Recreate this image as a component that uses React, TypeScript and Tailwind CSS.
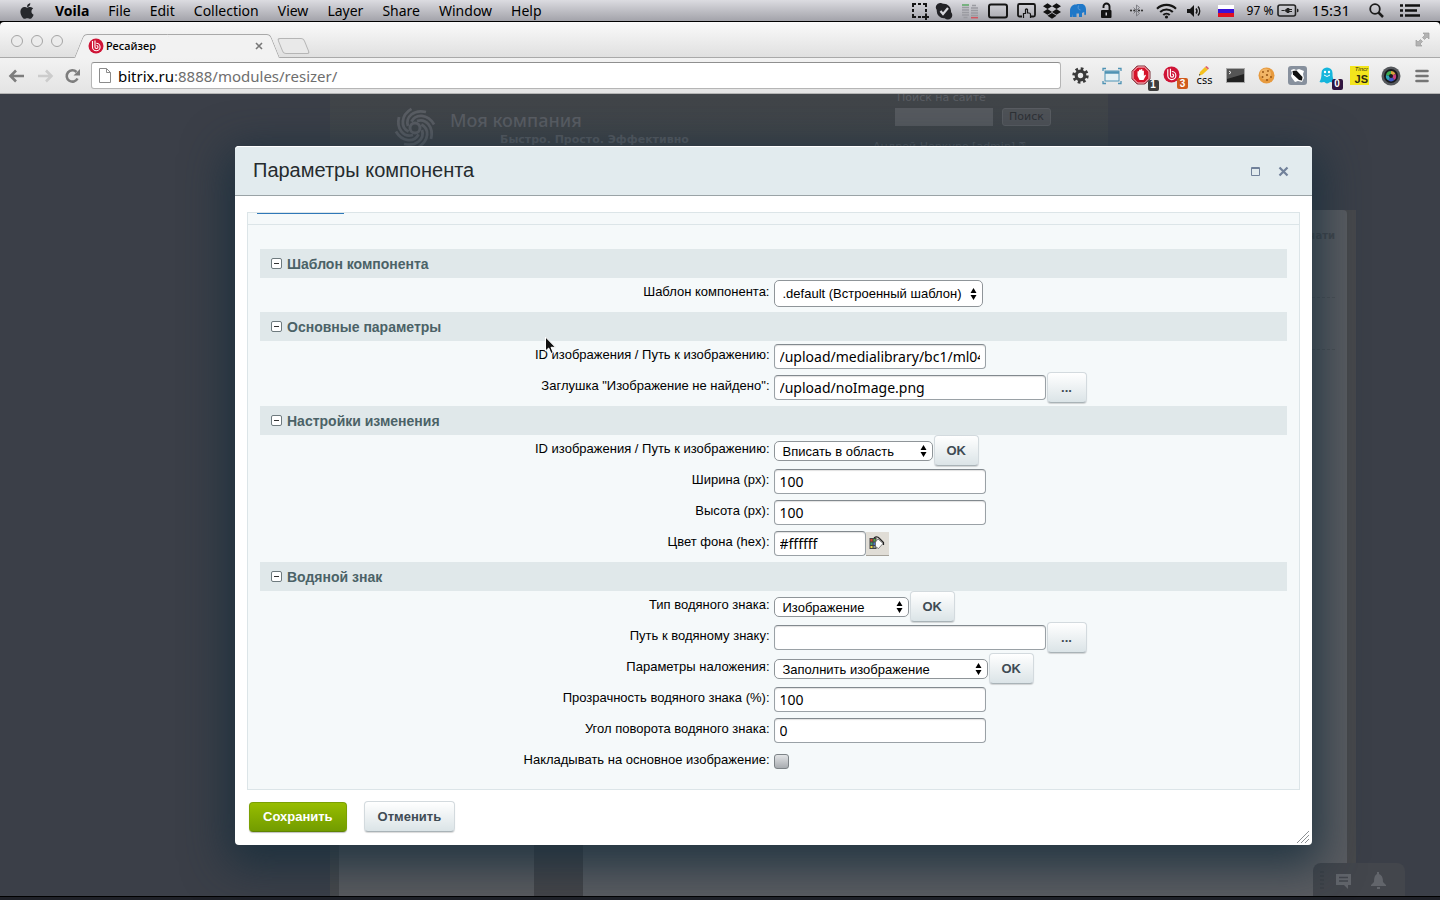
import { useState } from "react";
import type { ReactNode } from "react";
import { FaApple, FaDropbox } from "react-icons/fa";

type Control =
  | { type: "text"; value: string; size: "sm" | "md" | "lg"; extra?: "browse" | "color" }
  | { type: "select"; value: string; width: string; tall?: boolean; confirm?: boolean }
  | { type: "checkbox" };

type Field = { id: string; label: string; control: Control };

type Section = { title: string; fields: Field[] };

const sections: Section[] = [
  {
    title: "Шаблон компонента",
    fields: [
      {
        id: "template",
        label: "Шаблон компонента:",
        control: { type: "select", value: ".default (Встроенный шаблон)", width: "w-[209px]", tall: true }
      }
    ]
  },
  {
    title: "Основные параметры",
    fields: [
      {
        id: "image",
        label: "ID изображения / Путь к изображению:",
        control: { type: "text", value: "/upload/medialibrary/bc1/ml04", size: "md" }
      },
      {
        id: "stub",
        label: 'Заглушка "Изображение не найдено":',
        control: { type: "text", value: "/upload/noImage.png", size: "lg", extra: "browse" }
      }
    ]
  },
  {
    title: "Настройки изменения",
    fields: [
      {
        id: "mode",
        label: "ID изображения / Путь к изображению:",
        control: { type: "select", value: "Вписать в область", width: "w-[159px]", confirm: true }
      },
      { id: "width", label: "Ширина (px):", control: { type: "text", value: "100", size: "md" } },
      { id: "height", label: "Высота (px):", control: { type: "text", value: "100", size: "md" } },
      { id: "color", label: "Цвет фона (hex):", control: { type: "text", value: "#ffffff", size: "sm", extra: "color" } }
    ]
  },
  {
    title: "Водяной знак",
    fields: [
      {
        id: "wm-type",
        label: "Тип водяного знака:",
        control: { type: "select", value: "Изображение", width: "w-[135px]", confirm: true }
      },
      {
        id: "wm-path",
        label: "Путь к водяному знаку:",
        control: { type: "text", value: "", size: "lg", extra: "browse" }
      },
      {
        id: "wm-overlay",
        label: "Параметры наложения:",
        control: { type: "select", value: "Заполнить изображение", width: "w-[214px]", confirm: true }
      },
      { id: "wm-alpha", label: "Прозрачность водяного знака (%):", control: { type: "text", value: "100", size: "md" } },
      { id: "wm-angle", label: "Угол поворота водяного знака:", control: { type: "text", value: "0", size: "md" } },
      { id: "wm-apply", label: "Накладывать на основное изображение:", control: { type: "checkbox" } }
    ]
  }
];

const menuItems = ["File", "Edit", "Collection", "View", "Layer", "Share", "Window", "Help"];

const statusIcons: Array<{ name: string; cell: string; icon: ReactNode }> = [
  {
    name: "Screenshot",
    cell: "w-6",
    icon: (
      <svg width="18" height="18" viewBox="0 0 18 18" fill="none" stroke="#151515" strokeWidth="2">
        <path d="M2 5V2h3M7 2h3M12 2h3v3M15 7v3M2 7v3M2 12v3h3M7 15h3M11 15h7M15 11.500v7" />
      </svg>
    )
  },
  {
    name: "Skype",
    cell: "w-6",
    icon: (
      <svg width="18" height="18" viewBox="0 0 18 18">
        <path d="M5 1a4 4 0 0 1 3 .8A7.300 7.300 0 0 1 16 10a4.300 4.300 0 0 1-6.300 6.200A7.300 7.300 0 0 1 1.800 8 4.300 4.300 0 0 1 5 1Z" fill="#222226" />
        <path d="m5.500 9 2.500 3 5-6" stroke="#d8d8dd" strokeWidth="2.200" fill="none" />
      </svg>
    )
  },
  {
    name: "Traffic",
    cell: "w-7",
    icon: (
      <svg width="18" height="18" viewBox="0 0 18 18" strokeWidth="1.500">
        <path d="M1 5.500h7M1 8h7M1 10.500h7M1 13h7M2.500 15.500h4M11 3.500h4M10 6h7M10 8.500h7M10 11h7M10 13.500h7" stroke="#9a9ba1" />
        <path d="M1 3h7" stroke="#5aa763" />
        <path d="M10 15.700h7" stroke="#d05560" />
      </svg>
    )
  },
  {
    name: "Display",
    cell: "w-7",
    icon: (
      <svg width="20" height="16" viewBox="0 0 20 16">
        <rect x="1" y="1.500" width="18" height="13" rx="2" fill="none" stroke="#151515" strokeWidth="2" />
      </svg>
    )
  },
  {
    name: "Gestures",
    cell: "w-7",
    icon: (
      <svg width="19" height="17" viewBox="0 0 19 17" fill="none" stroke="#151515">
        <path d="M5 14.500H2.500A1.500 1.500 0 0 1 1 13V3.500A1.500 1.500 0 0 1 2.500 2h14A1.500 1.500 0 0 1 18 3.500V13a1.500 1.500 0 0 1-1.500 1.500H14" strokeWidth="1.800" />
        <path d="M6.500 16v-5M8.500 12V7.500q1-1 2 0V11h1.500q1.500 0 1.500 1.500V16M6.500 11.500h2" strokeWidth="1.200" />
      </svg>
    )
  },
  { name: "Dropbox", cell: "w-6", icon: <FaDropbox size={18} color="#111" /> },
  {
    name: "Elephant",
    cell: "w-7",
    icon: (
      <svg width="18" height="17" viewBox="0 0 18 17" fill="#1f78c8">
        <path d="M1 15V9c0-4 2.500-6.500 5.500-6.500 1 0 1.500-.5 3-.5h3c3 0 4.500 2.500 4.500 5.500V12c0 1.500-1.800 1.500-1.800 0V10L13 11v4h-3v-3.500H7.500V15H4v-3l-.5 3Z" />
        <path d="M9.500 3.500C8.500 6 9.500 8 11.500 8" stroke="#7fb0e0" fill="none" strokeWidth=".6" />
      </svg>
    )
  },
  {
    name: "Lock",
    cell: "w-7",
    icon: (
      <svg width="12" height="17" viewBox="0 0 12 17">
        <rect x="1" y="8" width="10.500" height="8" rx="1" fill="#111" />
        <path d="M9.500 9V4.500a3 3 0 0 0-6 0V6" fill="none" stroke="#111" strokeWidth="1.900" />
        <rect x="5.500" y="10.500" width="1.500" height="3" fill="#c8c8cd" />
      </svg>
    )
  },
  {
    name: "Bluetooth",
    cell: "w-8",
    icon: (
      <svg width="15" height="15" viewBox="0 0 15 15" fill="none" stroke="#77787e" strokeWidth=".9">
        <path d="m4.500 4.500 6 6-3 2.500V2l3 2.500-6 6" />
        <g fill="#333" stroke="none">
          <circle cx="2" cy="7.500" r="1.100" />
          <circle cx="5.300" cy="7.500" r="1.100" />
          <circle cx="10" cy="7.500" r="1.100" />
          <circle cx="13" cy="7.500" r="1.100" />
        </g>
      </svg>
    )
  },
  {
    name: "Wi-Fi",
    cell: "w-7",
    icon: (
      <svg width="21" height="16" viewBox="0 0 21 16" fill="none" stroke="#151515" strokeWidth="2.100">
        <path d="M1 5.800a13.500 13.500 0 0 1 19 0M4.200 9a9 9 0 0 1 12.600 0M7.300 12a4.600 4.600 0 0 1 6.400 0" />
        <circle cx="10.500" cy="14" r="1.600" fill="#151515" stroke="none" />
      </svg>
    )
  },
  {
    name: "Volume",
    cell: "w-7",
    icon: (
      <svg width="16" height="14" viewBox="0 0 16 14" fill="#151515">
        <path d="M1 5h3l4-4v12L4 9H1Z" />
        <path d="M10 4.500a4 4 0 0 1 0 5M12 2.500a7 7 0 0 1 0 9" fill="none" stroke="#151515" strokeWidth="1.500" />
      </svg>
    )
  },
  {
    name: "Keyboard layout",
    cell: "w-9",
    icon: (
      <svg width="16" height="12" viewBox="0 0 16 12">
        <rect width="16" height="4" fill="#fff" />
        <rect y="4" width="16" height="4" fill="#3a12d8" />
        <rect y="8" width="16" height="4" fill="#e01020" />
      </svg>
    )
  }
];

const BitrixMark = ({ size }: { size: number }) => (
  <svg width={size} height={size} viewBox="0 0 16 16" fill="none">
    <circle cx="8" cy="8" r="7.500" fill="#cf1436" />
    <path d="M4.500 3v6a3.800 3.800 0 1 0 3.800-3.800M7 2.500V9a1.500 1.500 0 1 0 1.500-1.500" stroke="#fff" strokeWidth="1.100" />
  </svg>
);

const ToolbarBadge = ({ text, color }: { text: string; color: string }) => (
  <span
    className={`absolute -right-1 -bottom-1 flex h-[11px] w-[11px] items-center justify-center rounded-[2px] font-['Liberation_Sans'] text-[10px] leading-none font-bold text-white ${color}`}
  >
    {text}
  </span>
);

const extensions: Array<{ name: string; icon: ReactNode }> = [
  {
    name: "Настройки",
    icon: (
      <svg width="17" height="17" viewBox="0 0 17 17">
        <circle cx="8.500" cy="8.500" r="6.800" fill="none" stroke="#3a3a3a" strokeWidth="2.800" strokeDasharray="2.670 2.670" />
        <circle cx="8.500" cy="8.500" r="4.300" fill="none" stroke="#3a3a3a" strokeWidth="3.200" />
      </svg>
    )
  },
  {
    name: "Window Resizer",
    icon: (
      <svg width="20" height="18" viewBox="0 0 20 18" fill="none" stroke="#4f93b4">
        <path d="M1 4V1.500h3M16 1.500h3V4M1 14v2.500h3M16 16.500h3V14" strokeWidth="1.300" />
        <rect x="3" y="4" width="14" height="10" fill="#e5f1f5" />
        <path d="M3 5.500h14" strokeWidth="2.500" />
      </svg>
    )
  },
  {
    name: "AdBlock",
    icon: (
      <span className="relative flex pr-1 pb-0.5">
        <svg width="20" height="20" viewBox="0 0 20 20">
          <path d="M6.200 1h7.600L19 6.200v7.600L13.800 19H6.200L1 13.800V6.200Z" fill="#d5132a" stroke="#7b3039" />
          <path d="M6.600 2h6.800L18 6.600v6.800L13.400 18H6.600L2 13.400V6.600Z" fill="none" stroke="#fff" strokeWidth=".8" />
          <path d="M6.500 11V6.500q.8-1 1.500 0V5q.9-1 1.700 0v-.500q.9-1 1.700 0V6q.8-.8 1.500 0v5l1-1.200q1-.300 1 .600L12.500 15h-4Z" fill="#fff" />
        </svg>
        <ToolbarBadge text="1" color="bg-[#3d3d3d]" />
      </span>
    )
  },
  {
    name: "Битрикс",
    icon: (
      <span className="relative flex pr-1 pb-0.5">
        <BitrixMark size={17} />
        <ToolbarBadge text="3" color="bg-[#d05a1c]" />
      </span>
    )
  },
  {
    name: "CSS",
    icon: (
      <span className="flex flex-col items-center">
        <svg width="12" height="10" viewBox="0 0 12 10">
          <path d="m1 9.500 1-3.500 5-5 3 2.500-5.500 5Z" fill="#f4c11e" />
          <path d="m7 1 1.500-1L11 2.300 10 3.500Z" fill="#e0606e" />
          <path d="m1 9.500.400-1.500 1.200 1Z" fill="#222" />
        </svg>
        <span className="font-['DejaVu_Sans'] text-[10px] leading-[10px] font-medium text-black">css</span>
      </span>
    )
  },
  {
    name: "Terminal",
    icon: (
      <svg width="19" height="15" viewBox="0 0 19 15">
        <rect x=".5" y=".5" width="18" height="14" fill="#222" stroke="#aaa" />
        <path d="M1 1h17v5L1 11Z" fill="#555" />
        <path d="m3 3 2 1.500L3 6" fill="none" stroke="#fff" strokeWidth=".9" />
      </svg>
    )
  },
  {
    name: "Cookies",
    icon: (
      <svg width="17" height="17" viewBox="0 0 17 17">
        <circle cx="8.500" cy="8.500" r="8" fill="#e79a3e" />
        <circle cx="7.500" cy="7" r="5.500" fill="#f2b566" />
        <g fill="#9a5716">
          <circle cx="5" cy="5" r="1" />
          <circle cx="10" cy="4" r=".9" />
          <circle cx="9" cy="8" r="1.100" />
          <circle cx="4.500" cy="10" r="1" />
          <circle cx="9" cy="13" r="1.100" />
          <circle cx="13" cy="10" r="1" />
        </g>
      </svg>
    )
  },
  {
    name: "Tag",
    icon: (
      <svg width="19" height="19" viewBox="0 0 19 19">
        <rect width="19" height="19" rx="3" fill="#87909d" />
        <path d="m3 4 3-1 2 1 3-1 5 2-1 3 1 4-2 4-4-1-3 1-3-4-1-2 1-3Z" fill="#fff" />
        <path d="m4.500 5 4-.5 6 6.500-.5 3.500-3-.5L5 8.500Z" fill="#111" />
      </svg>
    )
  },
  {
    name: "Ghostery",
    icon: (
      <span className="relative flex pr-1 pb-0.5">
        <svg width="16" height="18" viewBox="0 0 16 18">
          <path d="M2.500 7a5.500 5.500 0 0 1 11 0c0 4 .5 6 2 9-2 1.500-3 0-4 0s-2 1.500-3.500 1.500S6 16 5 16s-2.500 1-4.500 0c1.500-3 2-5 2-9Z" fill="#14b5dc" />
          <circle cx="6" cy="6" r="1.200" fill="#fff" />
          <circle cx="10" cy="6" r="1.200" fill="#fff" />
          <path d="M5 9q3 3 6 0" stroke="#fff" fill="none" />
        </svg>
        <ToolbarBadge text="0" color="bg-[#2f1440]" />
      </span>
    )
  },
  {
    name: "Tincr",
    icon: (
      <span className="flex h-[19px] w-[19px] flex-col items-end bg-[#f3e51c] pr-px text-[#2e2b10]">
        <span className="font-['Liberation_Sans'] text-[6px] leading-[7px] italic">Tincr</span>
        <span className="font-['Liberation_Sans'] text-[11px] leading-3 font-bold">JS</span>
      </span>
    )
  },
  {
    name: "Color picker",
    icon: (
      <svg width="20" height="20" viewBox="0 0 20 20">
        <circle cx="10" cy="10" r="9.500" fill="#55585c" />
        <circle cx="10" cy="10" r="7" fill="#17181c" />
        <path d="M10 10V5a5 5 0 0 1 4.500 3Z" fill="#dba43c" />
        <path d="m10 10 4.500-2a5 5 0 0 1-1 6Z" fill="#c83f7e" />
        <path d="m10 10 3.500 4a5 5 0 0 1-6 .5Z" fill="#4058c8" />
        <path d="m10 10-2.500 4.500A5 5 0 0 1 5 9Z" fill="#2fa5b9" />
        <path d="M10 10 5 9a5 5 0 0 1 5-4Z" fill="#3fae50" />
        <circle cx="10" cy="10" r="2" fill="#17181c" />
      </svg>
    )
  },
  {
    name: "Меню",
    icon: (
      <svg width="14" height="14" viewBox="0 0 14 14" stroke="#757575" strokeWidth="2.600" strokeLinecap="round">
        <path d="M1.500 2h11M1.500 7h11M1.500 12h11" />
      </svg>
    )
  }
];

const MenuBar = () => (
  <header className="flex h-[22px] items-center border-b border-black bg-linear-to-b from-[#dcdce1] to-[#a3a3aa] px-5 font-['Noto_Sans',sans-serif] text-[14px] leading-[21px] text-black">
    <FaApple size={18} color="#26282c" className="-ml-0.5" />
    <nav className="ml-[19px] flex gap-[19px]">
      <button type="button" className="font-bold">Voila</button>
      {menuItems.map((item) => (
        <button key={item} type="button">{item}</button>
      ))}
    </nav>
    <div className="-mr-[10px] ml-auto flex items-center">
      {statusIcons.map((status) => (
        <span key={status.name} title={status.name} className={`flex justify-center ${status.cell}`}>
          {status.icon}
        </span>
      ))}
      <span className="w-8 text-center text-[12px] whitespace-nowrap">97 %</span>
      <span className="flex w-6 justify-center">
        <svg width="22" height="13" viewBox="0 0 22 13">
          <rect x="1" y="1" width="17.500" height="11" rx="2" fill="none" stroke="#222" strokeWidth="1.600" />
          <path d="M20 4.500v4l1.500-1v-2Z" fill="#222" />
          <path d="M4.500 6.500h3M8 6.500l2-2h2v4h-2ZM12 5.500h3M12 7.500h3" fill="#222" stroke="#222" />
        </svg>
      </span>
      <span className="w-[62px] text-center text-[15px]">15:31</span>
      <span className="flex w-7 justify-center">
        <svg width="15" height="15" viewBox="0 0 15 15" fill="none" stroke="#1c1c1c">
          <circle cx="6" cy="6" r="4.800" strokeWidth="1.800" />
          <path d="m9.500 9.500 4.500 4.500" strokeWidth="2.500" />
        </svg>
      </span>
      <span className="flex w-10 justify-center">
        <svg width="22" height="15" viewBox="0 0 22 15" stroke="#111" strokeWidth="2.600">
          <path d="M1 2.500h3M6 2.500h15M1 7.500h3M6 7.500h12M1 12.500h3M6 12.500h15" />
        </svg>
      </span>
    </div>
  </header>
);

const TabStrip = () => (
  <div className="flex h-9 items-end rounded-t-[4px] border-b border-[#a9a9a9] bg-linear-to-b from-[#fafafa] to-[#e0e0e0] pl-[11px]">
    <div className="mb-[10px] flex gap-2">
      <span className="h-3 w-3 rounded-full border border-[#a5a5a5] bg-[#ececec]" />
      <span className="h-3 w-3 rounded-full border border-[#a5a5a5] bg-[#ececec]" />
      <span className="h-3 w-3 rounded-full border border-[#a5a5a5] bg-[#ececec]" />
    </div>
    <div className="relative -mb-px ml-[11px] flex h-6 w-[205px] items-center pr-[14px] pl-[14px]">
      <span className="absolute inset-y-0 left-0 w-1/2 origin-bottom -skew-x-[22deg] rounded-tl-[4px] border-t border-l border-[#a9a9a9] bg-[#f2f2f2]" />
      <span className="absolute inset-y-0 right-0 w-1/2 origin-bottom skew-x-[22deg] rounded-tr-[4px] border-t border-r border-[#a9a9a9] bg-[#f2f2f2]" />
      <span className="relative flex w-full items-center">
        <BitrixMark size={16} />
        <span className="ml-0.5 font-['Noto_Sans',sans-serif] text-[11px] leading-4 font-medium text-black">Ресайзер</span>
        <button type="button" aria-label="Закрыть вкладку" className="mr-0.5 ml-auto">
          <svg width="8" height="8" viewBox="0 0 8 8" stroke="#777" strokeWidth="1.600">
            <path d="m1 1 6 6M7 1 1 7" />
          </svg>
        </button>
      </span>
    </div>
    <button
      type="button"
      aria-label="Новая вкладка"
      className="mb-[3px] ml-px h-4 w-[27px] skew-x-[22deg] rounded-[3px] border border-[#b5b5b5] bg-[#e9e9e9]"
    />
    <svg className="mr-[10px] mb-[10px] ml-auto" width="15" height="15" viewBox="0 0 15 15" fill="#b3b3b3" stroke="#9c9c9c" strokeWidth=".7">
      <path d="M8 1h6v6l-2-2-2.500 2.500-2-2L10 3ZM7 14H1V8l2 2 2.500-2.500 2 2L5 12Z" />
    </svg>
  </div>
);

const Toolbar = () => (
  <div className="flex h-9 items-center border-b border-[#b4b4b4] bg-linear-to-b from-[#f2f2f2] to-[#e4e4e4] pr-[3px] pl-2">
    <div className="flex gap-[10px]">
      <button type="button" aria-label="Назад">
        <svg width="18" height="16" viewBox="0 0 18 16" fill="none" stroke="#7d7d7d" strokeWidth="2.600">
          <path d="M16 8H3M8 2.500 2.500 8 8 13.500" />
        </svg>
      </button>
      <button type="button" aria-label="Вперёд">
        <svg width="18" height="16" viewBox="0 0 18 16" fill="none" stroke="#cccccc" strokeWidth="2.600">
          <path d="M2 8h13M10 2.500 15.500 8 10 13.500" />
        </svg>
      </button>
      <button type="button" aria-label="Обновить">
        <svg width="18" height="16" viewBox="0 0 18 16" fill="none">
          <path d="M13.500 10.500A5.700 5.700 0 1 1 12.500 4" stroke="#7d7d7d" strokeWidth="2.600" />
          <path d="M16 1v6.500H9.500Z" fill="#7d7d7d" />
        </svg>
      </button>
    </div>
    <label className="mr-1 ml-[9px] flex h-[27px] flex-1 items-center rounded-[3px] border border-[#b5b5b5] border-t-[#8f8f8f] bg-white pl-[7px]">
      <svg width="12" height="15" viewBox="0 0 12 15" fill="#fff" stroke="#8b8b8b">
        <path d="M.5.5h7l4 4v10H.5ZM7.500.5v4h4" />
      </svg>
      <span className="ml-[7px] flex-1 font-['Noto_Sans',sans-serif] text-[15px] leading-6 text-[#6e6e6e]">
        <span className="text-black">bitrix.ru</span>:8888/modules/resizer/
      </span>
    </label>
    <div className="flex items-center">
      {extensions.map((extension) => (
        <button key={extension.name} type="button" title={extension.name} className="flex w-[31px] justify-center">
          {extension.icon}
        </button>
      ))}
    </div>
  </div>
);

const SiteBackground = () => (
  <div className="absolute inset-0 flex flex-col overflow-hidden bg-[#3b3f48] pl-[330px] font-['DejaVu_Sans',sans-serif] text-[#5b5e64]">
    <div className="flex h-[116px] w-[778px] shrink-0 bg-linear-to-b from-[#414549] to-[#3f4349] pl-16">
      <svg className="mt-[13px] h-[42px] w-[42px] shrink-0" viewBox="-21 -21 42 42" fill="none" stroke="#5b5e64" strokeWidth="2.800">
        <circle r="5" strokeWidth="3" />
        {[0, 45, 90, 135, 180, 225, 270, 315].map((angle) => (
          <path key={angle} d="M-7-2C-10-11-1-19 11-16" transform={`rotate(${angle})`} />
        ))}
      </svg>
      <div className="ml-[14px] pt-3">
        <div className="font-['Noto_Sans',sans-serif] text-[18px] leading-[28px] font-medium">Моя компания</div>
        <div className="pl-[50px] text-[11px] leading-3 font-bold">Быстро. Просто. Эффективно</div>
      </div>
      <div className="mt-[-3px] ml-auto w-[235px]">
        <div className="pl-6 text-[11px] leading-[14px]">Поиск на сайте</div>
        <div className="mt-[3px] ml-[22px] flex items-center gap-[9px]">
          <span className="h-[18px] w-[98px] bg-[#575a5f]" />
          <span className="rounded-[3px] border border-[#5a5d62] bg-[#4f5257] px-[6px] text-[11px] leading-4 text-[#2e3135]">Поиск</span>
        </div>
        <div className="mt-[14px] text-[11px] leading-[14px]">Андрей Неркуро [admin] ⍰</div>
      </div>
    </div>
    <div className="flex w-[1026px] flex-1 bg-[#47484b] px-[9px]">
      <div className="w-[195px] bg-[#5a5b5f]" />
      <div className="w-[49px] bg-[#444448]" />
      <div className="flex-1 rounded-tr-[4px] bg-[#5a5c61] px-3 pt-[18px] text-right text-[10px] leading-4 font-bold text-[#44474c]">
        печати
        <div className="mt-[53px] border-t border-dashed border-[#4f5256]" />
        <div className="mt-[51px] border-t border-dashed border-[#4f5256]" />
      </div>
    </div>
    <div className="absolute right-[35px] bottom-0 flex h-[33px] w-[92px] items-center rounded-t-[8px] bg-[#43464c] pl-[6px]">
      <svg width="78" height="20" viewBox="0 0 78 20" fill="#62656b">
        <path d="M1 2h4M1 6h4M1 10h4M1 14h4M1 18h4" stroke="#393c42" />
        <path d="M17 4h15v11h-3v4l-4-4h-8Z" />
        <path d="M20 7.500h9M20 11h9" stroke="#43464c" strokeWidth="1.500" />
        <path d="M58 2h2v2q4 1 4 8l3 3v1H52v-1l3-3q0-7 3-8ZM58 17h3v2h-3Z" />
      </svg>
    </div>
  </div>
);

const PanelButton = ({ children, label, padding = "px-3" }: { children: ReactNode; label?: string; padding?: string }) => (
  <button
    type="button"
    aria-label={label}
    className={`h-[31px] min-w-10 rounded-[4px] border border-[#d3dade] border-b-[#a9b3b7] bg-linear-to-b from-white to-[#dbe4e7] text-[13px] font-bold text-[#3f4b54] shadow-[0_1px_1px_rgba(0,0,0,0.15)] ${padding}`}
  >
    {children}
  </button>
);

const textSizes = { sm: "w-[92px]", md: "w-[212px]", lg: "w-[272px]" };

const FieldControl = ({ id, control }: { id: string; control: Control }) => {
  if (control.type === "checkbox") {
    return (
      <input
        id={id}
        type="checkbox"
        className="h-[15px] w-[15px] appearance-none rounded-[3px] border border-[#7d8387] bg-linear-to-b from-[#e2e4e6] to-[#a8acb0]"
      />
    );
  }

  if (control.type === "select") {
    return (
      <>
        <span className="relative flex items-center">
          <select
            id={id}
            className={`appearance-none rounded-[5px] border border-[#8f9599] bg-white pl-2 text-[13px] text-black ${control.width} ${
              control.tall ? "h-[27px]" : "h-5"
            }`}
          >
            <option>{control.value}</option>
          </select>
          <svg className="pointer-events-none absolute right-[6px]" width="7" height="12" viewBox="0 0 7 12">
            <path d="M3.500 0 6.500 5h-6ZM3.500 12l3-5h-6Z" />
          </svg>
        </span>
        {control.confirm ? <PanelButton>OK</PanelButton> : null}
      </>
    );
  }

  return (
    <>
      <input
        id={id}
        type="text"
        defaultValue={control.value}
        className={`h-[25px] rounded-[4px] border border-[#9aa1a6] border-t-[#82898e] bg-white px-[5px] font-['Noto_Sans',sans-serif] text-[14px] text-black shadow-[inset_0_1px_1px_rgba(0,0,0,0.12)] ${textSizes[control.size]}`}
      />
      {control.extra === "browse" ? <PanelButton label="Выбрать файл">...</PanelButton> : null}
      {control.extra === "color" ? (
        <button
          type="button"
          aria-label="Выбрать цвет"
          className="-ml-px flex h-6 w-[23px] items-center justify-center border-b border-[#a5a29a] bg-[#e0ddd6]"
        >
          <svg width="16" height="14" viewBox="0 0 16 14">
            <rect x=".5" y="2" width="7" height="11" fill="#444" />
            <path d="M1.500 3h2v2.500h-2Z" fill="#d6412e" />
            <path d="M4.500 3h2v2.500h-2Z" fill="#57a845" />
            <path d="M1.500 6.500h2v2.500h-2Z" fill="#43a06a" />
            <path d="M4.500 6.500h2v2.500h-2Z" fill="#4b78c9" />
            <path d="M1.500 10h2v2h-2Z" fill="#efdc3c" />
            <path d="M4.500 10h2v2h-2Z" fill="#8c969a" />
            <path d="m9 3 5 4.500-4.500 5-3-2V6Z" fill="#fff" stroke="#555" strokeWidth=".7" />
            <path d="M5 2q3-2.500 5.500.5l4 4V9" fill="none" stroke="#222" strokeWidth="1.200" />
          </svg>
        </button>
      ) : null}
    </>
  );
};

const ParameterSection = ({ section }: { section: Section }) => {
  const [open, setOpen] = useState(true);

  return (
    <section className="pb-[3px]">
      <h2 className="bg-[#e0e8ea]">
        <button
          type="button"
          onClick={() => setOpen(!open)}
          className="flex h-[29px] w-full items-center gap-[5px] pl-[11px] text-[14px] font-bold text-[#4b6267]"
        >
          <svg width="11" height="11" viewBox="0 0 11 11" fill="#fff" stroke="#6e7a7e">
            <rect x=".5" y=".5" width="10" height="10" rx="1.500" />
            <path d={open ? "M3 5.500h5" : "M3 5.500h5M5.500 3v5"} stroke="#333" />
          </svg>
          <span className="pt-0.5">{section.title}</span>
        </button>
      </h2>
      {open
        ? section.fields.map((field) => (
            <div key={field.id} className="grid h-[31px] grid-cols-2 items-center">
              <label htmlFor={field.id} className="pr-1 pb-[3px] text-right text-[13px] leading-4 text-black">
                {field.label}
              </label>
              <div className="flex items-center gap-px">
                <FieldControl id={field.id} control={field.control} />
              </div>
            </div>
          ))
        : null}
    </section>
  );
};

const ParametersDialog = () => (
  <div
    role="dialog"
    aria-labelledby="dialog-title"
    className="relative mt-[52px] mr-32 mb-[51px] ml-[235px] rounded-[4px] bg-white font-['Liberation_Sans',sans-serif] shadow-[0_12px_44px_8px_rgba(24,46,60,0.85)]"
  >
    <div className="flex h-[50px] items-center rounded-t-[4px] border-t border-b border-t-white border-b-[#9aa3a6] bg-[#e2ebee] pr-[23px] pl-[18px]">
      <h1 id="dialog-title" className="pb-0.5 text-[20px] leading-6 text-[#262b2e]">Параметры компонента</h1>
      <button type="button" aria-label="Развернуть" className="ml-auto">
        <svg width="9" height="9" viewBox="0 0 9 9" fill="none" stroke="#71819a">
          <path d="M.5.5h8v8h-8ZM0 1.500h9" />
        </svg>
      </button>
      <button type="button" aria-label="Закрыть" className="ml-[18px]">
        <svg width="11" height="11" viewBox="0 0 11 11" stroke="#71819a" strokeWidth="2.200">
          <path d="m1.500 1.500 8 8M9.500 1.500l-8 8" />
        </svg>
      </button>
    </div>
    <form className="px-3 pt-4 pb-[13px]" onSubmit={(event) => event.preventDefault()}>
      <div className="border border-[#dce5e8] bg-[#f5f9fa]">
        <div className="h-3 border-b border-[#dce5e8] pl-[9px]">
          <div className="h-px w-[87px] bg-[#2f78b8]" />
        </div>
        <div className="px-3 pt-6 pb-[9px]">
          {sections.map((section) => (
            <ParameterSection key={section.title} section={section} />
          ))}
        </div>
      </div>
      <div className="mt-[11px] flex items-center gap-[17px] pl-0.5">
        <button
          type="submit"
          className="h-[30px] rounded-[4px] border border-[#7ba004] border-b-[#5f8302] bg-linear-to-b from-[#97bd00] to-[#729c00] px-[13px] text-[13px] font-bold text-white shadow-[0_1px_1px_rgba(0,0,0,0.25)]"
        >
          Сохранить
        </button>
        <PanelButton padding="px-[13px]">Отменить</PanelButton>
      </div>
    </form>
    <svg className="absolute right-[3px] bottom-[2px]" width="12" height="12" viewBox="0 0 12 12" stroke="#8d9194">
      <path d="M0 12 12 0M4 12l8-8M8 12l4-4" />
    </svg>
    <svg className="pointer-events-none absolute top-[190px] left-[309px]" width="13" height="20" viewBox="0 0 13 20">
      <path d="M1.500 1v14l3.200-3 2.300 5.500 2.300-1L7 11.300h4.500Z" fill="#111" stroke="#fff" />
    </svg>
  </div>
);

const App = () => (
  <div className="flex min-h-screen flex-col bg-black">
    <MenuBar />
    <TabStrip />
    <Toolbar />
    <main className="relative flex-1">
      <SiteBackground />
      <ParametersDialog />
    </main>
    <div className="h-1 border-t border-black bg-[#1f2128]" />
  </div>
);

export default App;
